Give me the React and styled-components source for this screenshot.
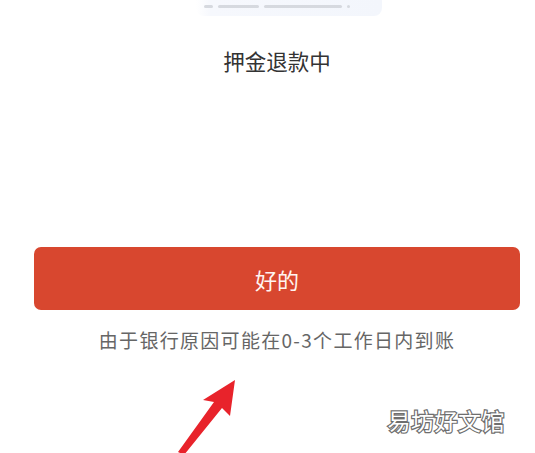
import React from "react";
import styled, { createGlobalStyle } from "styled-components";

const GlobalStyle = createGlobalStyle`
  html, body {
    margin: 0;
    padding: 0;
    background: #ffffff;
  }
  body {
    font-family: "Noto Sans CJK SC", "Noto Sans", sans-serif;
  }
`;

const Page = styled.div`
  position: relative;
  width: 535px;
  height: 453px;
  overflow: hidden;
  background: #ffffff;
`;

const Content = styled.div`
  display: flex;
  flex-direction: column;
  align-items: center;
  padding: 0 15px 0 34px;
`;

// faint progress card peeking in at the top
const StatusCard = styled.div`
  display: flex;
  align-items: center;
  gap: 5px;
  width: 186px;
  height: 16px;
  margin-left: 24px;
  padding: 0 0 4px 8px;
  box-sizing: border-box;
  background: linear-gradient(90deg, #ffffff 0%, #f6f8fd 8%, #f3f6fc 100%);
  border-radius: 0 0 8px 8px;
`;

const Dash = styled.span`
  display: block;
  width: ${(p) => p.$w}px;
  height: 3px;
  border-radius: 2px;
  background: #d6d9df;
`;

const Title = styled.h2`
  margin: 29px 0 0;
  font-size: 21.5px;
  font-weight: 400;
  line-height: 32px;
  color: #333333;
`;

const Confirm = styled.button`
  width: 100%;
  height: 63px;
  margin-top: 170px;
  border: none;
  border-radius: 7px;
  background: #d8472f;
  color: #fff4f1;
  font-family: inherit;
  font-size: 22px;
  font-weight: 400;
  cursor: pointer;
`;

const Note = styled.p`
  margin: 17px 0 0;
  font-size: 19px;
  line-height: 26px;
  letter-spacing: 1.3px;
  color: #666666;
`;

const Pointer = styled.svg`
  position: absolute;
  left: 170px;
  top: 372px;
  width: 75px;
  height: 81px;
`;

const Stamp = styled.div`
  position: absolute;
  right: 30px;
  bottom: 20px;
  font-size: 23px;
  line-height: 26px;
  color: #ffffff;
  -webkit-text-stroke: 2.4px #6e6e6e;
  paint-order: stroke fill;
  letter-spacing: 0.5px;
`;

export default function App() {
  return (
    <>
      <GlobalStyle />
      <Page>
        <Content>
          <StatusCard>
            <Dash $w={9} />
            <Dash $w={41} />
            <Dash $w={78} />
            <Dash $w={3} />
          </StatusCard>
          <Title>押金退款中</Title>
          <Confirm>好的</Confirm>
          <Note>由于银行原因可能在0-3个工作日内到账</Note>
        </Content>
        <Pointer viewBox="0 0 75 81">
          <path
            d="M65 8 L60 44 L52 36 L14 83 L8 80 L44 30 L33 28 Z"
            fill="#e8232b"
          />
        </Pointer>
        <Stamp>易坊好文馆</Stamp>
      </Page>
    </>
  );
}
